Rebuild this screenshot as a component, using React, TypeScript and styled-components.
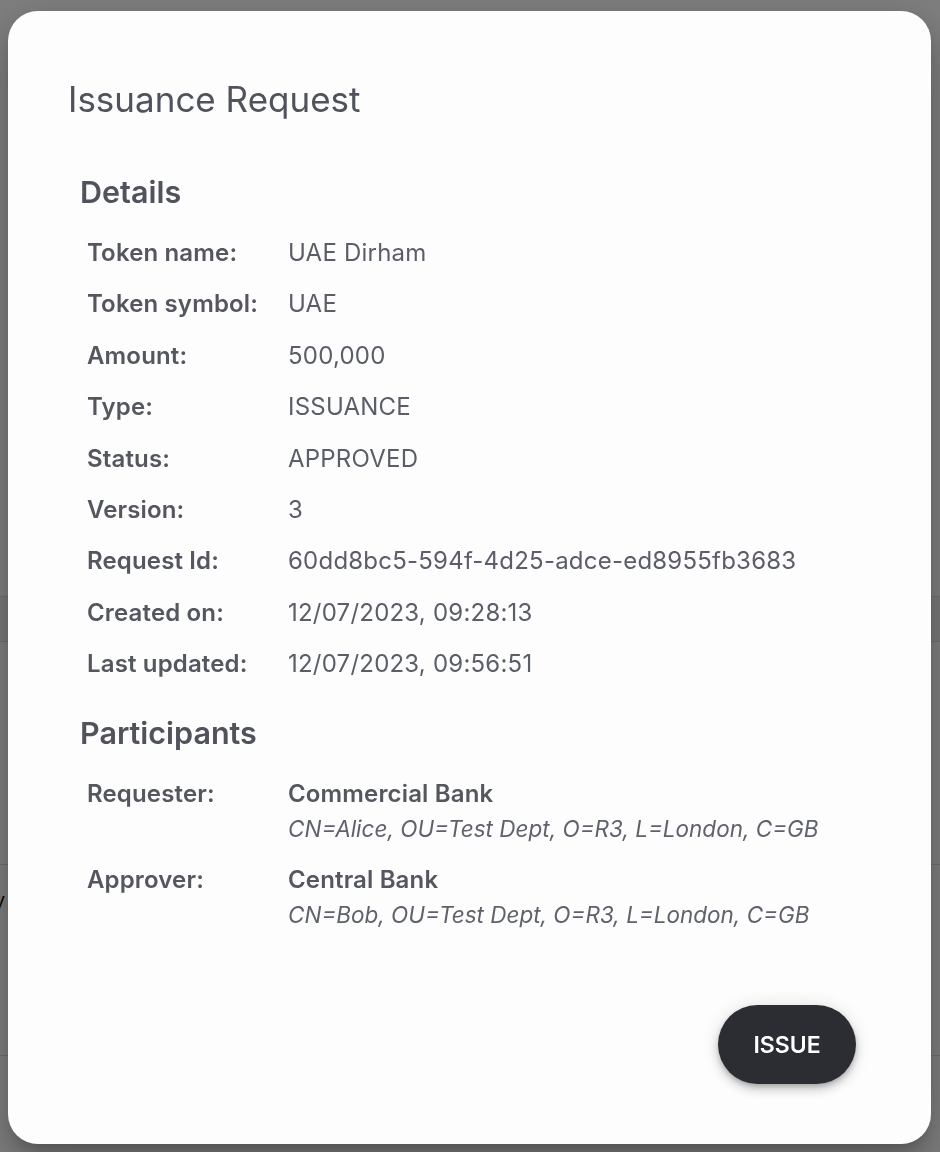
import React from "react";
import styled, { createGlobalStyle } from "styled-components";

const Global = createGlobalStyle`
  html, body { margin: 0; padding: 0; }
  body {
    background: #ffffff;
    font-family: Inter, "Noto Sans", Arial, sans-serif;
    width: 940px;
    height: 1152px;
    overflow: hidden;
  }
`;

const BehindPage = styled.div`
  position: fixed;
  inset: 0;
  background: #ffffff;
  z-index: 0;
`;

const BehindLine = styled.div<{ $top: number }>`
  position: absolute;
  left: 0;
  right: 0;
  top: ${(p) => p.$top}px;
  height: 1px;
  background: #e0e0e0;
`;

const BehindBand = styled.div`
  position: absolute;
  left: 0;
  right: 0;
  top: 596px;
  height: 45px;
  background: #f2f2f2;
`;

const BehindText = styled.span`
  position: absolute;
  left: -6px;
  top: 888px;
  font-size: 20px;
  color: #111;
  font-family: Inter, sans-serif;
`;

const Backdrop = styled.div`
  position: fixed;
  inset: 0;
  background: rgba(0, 0, 0, 0.5);
  z-index: 1;
`;

const Stage = styled.div`
  position: relative;
  z-index: 2;
  box-sizing: border-box;
  height: 1152px;
  padding: 11px 9px 8px 8px;
  display: flex;
`;

const Dialog = styled.section`
  flex: 1;
  background: #fdfdfd;
  border-radius: 30px;
  box-shadow: 0px 11px 15px -7px rgba(0, 0, 0, 0.2),
    0px 24px 38px 3px rgba(0, 0, 0, 0.14), 0px 9px 46px 8px rgba(0, 0, 0, 0.12);
  padding: 66px 60px 0 60px;
  display: flex;
  flex-direction: column;
  color: #55575f;
`;

const Title = styled.h2`
  margin: 0;
  font-size: 35px;
  font-weight: 400;
  line-height: 44px;
  color: #50535c;
  letter-spacing: 0;
`;

const Section = styled.div`
  padding-left: 12px;
  display: flex;
  flex-direction: column;
`;

const SectionTitle = styled.h3<{ $mt: number }>`
  margin: ${(p) => p.$mt}px 0 0 0;
  font-size: 30.5px;
  font-weight: 600;
  line-height: 40px;
  color: #50535c;
`;

const Rows = styled.div<{ $gap: number; $mt: number }>`
  display: grid;
  grid-template-columns: 201px 1fr;
  row-gap: ${(p) => p.$gap}px;
  padding-left: 7px;
  margin-top: ${(p) => p.$mt}px;
`;

const Label = styled.div`
  font-size: 24px;
  font-weight: 600;
  line-height: 36px;
  letter-spacing: 0.15px;
  color: #55575f;
  white-space: nowrap;
`;

const Value = styled.div`
  font-size: 24px;
  font-weight: 400;
  line-height: 36px;
  letter-spacing: 0.22px;
  color: #5b5e67;
  white-space: nowrap;
`;

const Party = styled.div`
  display: flex;
  flex-direction: column;
`;

const PartyName = styled.div`
  font-size: 24px;
  font-weight: 600;
  line-height: 36px;
  letter-spacing: 0.15px;
  color: #55575f;
`;

const PartyDn = styled.div`
  font-size: 22.5px;
  font-style: italic;
  font-weight: 400;
  line-height: 34px;
  color: #5f626b;
  white-space: nowrap;
`;

const Actions = styled.div`
  margin-top: auto;
  padding: 0 15px 60px 0;
  display: flex;
  justify-content: flex-end;
`;

const IssueButton = styled.button`
  height: 79px;
  min-width: 138px;
  padding: 0 34px;
  border: none;
  border-radius: 40px;
  background: #2c2d33;
  color: #ffffff;
  font-family: Inter, sans-serif;
  font-size: 23px;
  font-weight: 600;
  letter-spacing: 0;
  cursor: pointer;
  box-shadow: 0px 3px 5px -1px rgba(0, 0, 0, 0.2),
    0px 6px 10px 0px rgba(0, 0, 0, 0.14), 0px 1px 18px 0px rgba(0, 0, 0, 0.12);
`;

const details: [string, string][] = [
  ["Token name:", "UAE Dirham"],
  ["Token symbol:", "UAE"],
  ["Amount:", "500,000"],
  ["Type:", "ISSUANCE"],
  ["Status:", "APPROVED"],
  ["Version:", "3"],
  ["Request Id:", "60dd8bc5-594f-4d25-adce-ed8955fb3683"],
  ["Created on:", "12/07/2023, 09:28:13"],
  ["Last updated:", "12/07/2023, 09:56:51"],
];

const participants = [
  {
    role: "Requester:",
    name: "Commercial Bank",
    dn: "CN=Alice, OU=Test Dept, O=R3, L=London, C=GB",
  },
  {
    role: "Approver:",
    name: "Central Bank",
    dn: "CN=Bob, OU=Test Dept, O=R3, L=London, C=GB",
  },
];

export default function App() {
  return (
    <>
      <Global />
      <BehindPage>
        <BehindBand />
        <BehindLine $top={596} />
        <BehindLine $top={641} />
        <BehindLine $top={864} />
        <BehindLine $top={1055} />
        <BehindText>y</BehindText>
      </BehindPage>
      <Backdrop />
      <Stage>
        <Dialog>
          <Title>Issuance Request</Title>
          <Section>
            <SectionTitle $mt={51}>Details</SectionTitle>
            <Rows $gap={15.4} $mt={23}>
              {details.map(([k, v]) => (
                <React.Fragment key={k}>
                  <Label>{k}</Label>
                  <Value>{v}</Value>
                </React.Fragment>
              ))}
            </Rows>
            <SectionTitle $mt={31}>Participants</SectionTitle>
            <Rows $gap={16} $mt={23}>
              {participants.map((p) => (
                <React.Fragment key={p.role}>
                  <Label>{p.role}</Label>
                  <Party>
                    <PartyName>{p.name}</PartyName>
                    <PartyDn>{p.dn}</PartyDn>
                  </Party>
                </React.Fragment>
              ))}
            </Rows>
          </Section>
          <Actions>
            <IssueButton>ISSUE</IssueButton>
          </Actions>
        </Dialog>
      </Stage>
    </>
  );
}
